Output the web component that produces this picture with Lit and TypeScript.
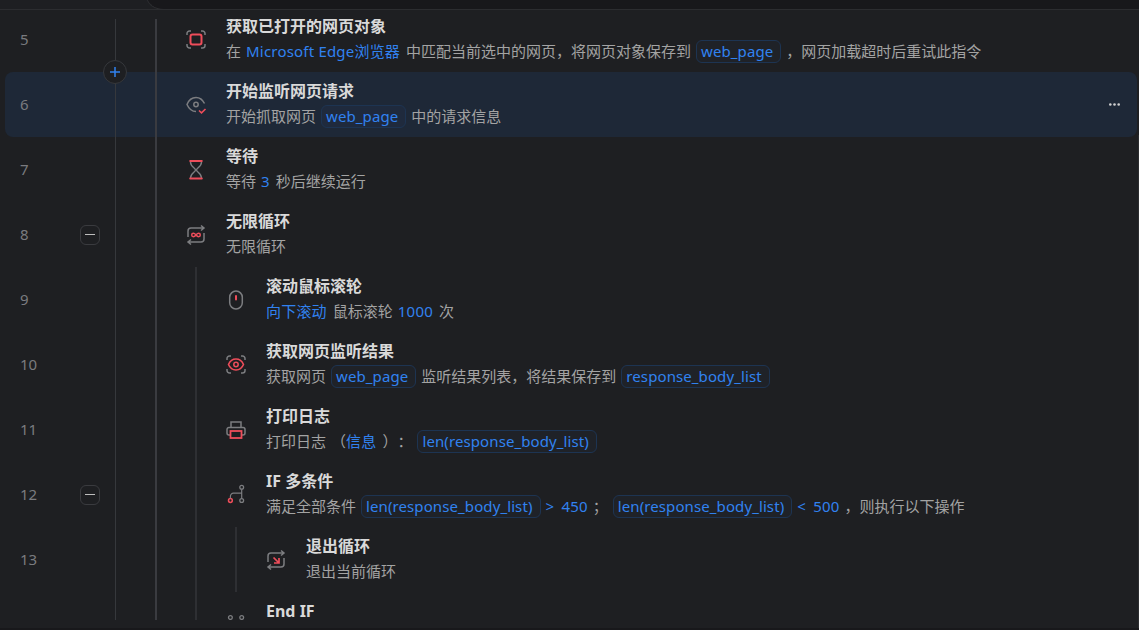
import { LitElement, html, css, svg, nothing } from "lit";
import { customElement } from "lit/decorators.js";

const G = "#7c7d80";
const R = "#ee4d5a";
const corners = svg`<path d="M1 5V3.500A2.500 2.500 0 0 1 3.500 1H5M15 1h1.500A2.500 2.500 0 0 1 19 3.500V5M19 14v1.500A2.500 2.500 0 0 1 16.500 18H15M5 18H3.500A2.500 2.500 0 0 1 1 15.500V14" fill="none" stroke="${G}" stroke-width="1.500"/>`;
const loop = svg`<path d="M2 12V6a3 3 0 0 1 3-3h13M15 .5l3 2.500-3 2.500M18 8v6a3 3 0 0 1-3 3H2M5 14.500L2 17l3 2.500" fill="none" stroke="${G}" stroke-width="1.500"/>`;
const ICONS: Record<string, unknown> = {
  page: svg`${corners}<rect x="4.500" y="4.500" width="11" height="10" rx="2" fill="none" stroke="${R}" stroke-width="2"/>`,
  watch: svg`<path d="M18.500 8.500C16.500 4.500 13.500 2.500 10 2.500S3 4.500 1 9.500c2 4.500 5 7 9 7" fill="none" stroke="${G}" stroke-width="1.500"/><circle cx="10" cy="9.500" r="2.200" fill="none" stroke="${G}" stroke-width="1.500"/><path d="M13 15.500l2.500 2.300L19.500 14" fill="none" stroke="${R}" stroke-width="1.600"/>`,
  wait: svg`<path d="M4.500 2C4.500 7 9.500 8 9.500 10S4.500 13 4.500 18M15.500 2C15.500 7 10.500 8 10.500 10S15.500 13 15.500 18" fill="none" stroke="${G}" stroke-width="1.400"/><path d="M4.200 1h11.600M4.200 18.500h11.600" stroke="${R}" stroke-width="2" stroke-linecap="round"/>`,
  loop: svg`${loop}<path d="M10 10c-1-1.200-1.700-1.700-2.600-1.700a1.700 1.700 0 0 0 0 3.400c.9 0 1.600-.5 2.600-1.700s1.700-1.700 2.600-1.700a1.700 1.700 0 0 1 0 3.400c-.9 0-1.600-.5-2.600-1.700z" fill="none" stroke="${R}" stroke-width="1.500"/>`,
  mouse: svg`<rect x="3.700" y="1" width="12.600" height="18" rx="6.300" fill="none" stroke="${G}" stroke-width="1.500"/><path d="M10 6v3.500" stroke="${R}" stroke-width="2" stroke-linecap="round"/>`,
  result: svg`${corners}<path d="M2.500 9.500C4 6 7 4 10 4s6 2 7.500 5.500C16 13 13 15 10 15S4 13 2.500 9.500z" fill="none" stroke="${R}" stroke-width="1.600"/><circle cx="10" cy="9.500" r="2.200" fill="none" stroke="${R}" stroke-width="1.500"/>`,
  print: svg`<path d="M5 7V2h10v5M5 15H3a2 2 0 0 1-2-2V9.500a2 2 0 0 1 2-2h14a2 2 0 0 1 2 2V13a2 2 0 0 1-2 2h-2" fill="none" stroke="${G}" stroke-width="1.500"/><rect x="4.500" y="11" width="11" height="7" fill="none" stroke="${R}" stroke-width="1.800"/>`,
  branch: svg`<circle cx="15.700" cy="2.300" r="1.900" fill="none" stroke="${G}" stroke-width="1.300"/><circle cx="15.700" cy="15.500" r="1.900" fill="none" stroke="${G}" stroke-width="1.300"/><circle cx="4.400" cy="15.500" r="1.900" fill="none" stroke="${R}" stroke-width="1.500"/><path d="M15.700 4.300v9.200M15.700 8.200H7.400a3 3 0 0 0-3 3v2.300" fill="none" stroke="${G}" stroke-width="1.200"/>`,
  exit: svg`${loop}<path d="M7.500 7.500l5 5M13 8v5H8" fill="none" stroke="${R}" stroke-width="1.700"/>`,
  end: svg`<circle cx="4.400" cy="2.500" r="1.900" fill="none" stroke="${G}" stroke-width="1.300"/><circle cx="15.700" cy="2.500" r="1.900" fill="none" stroke="${G}" stroke-width="1.300"/>`,
};

type Tok = string | { b: string } | { c: string } | { t: string } | { o: string };
interface Row {
  n: number; depth: number; icon: string; title: string; sub: Tok[];
  toggle?: boolean; active?: boolean;
}
const LEN = { c: "len(response_body_list)" };
const PAGE = { c: "web_page" };
const ROWS: Row[] = [
  { n: 5, depth: 0, icon: "page", title: "获取已打开的网页对象", sub: ["在", { b: "Microsoft Edge浏览器" }, "中匹配当前选中的网页，将网页对象保存到", PAGE, "，网页加载超时后重试此指令"] },
  { n: 6, depth: 0, icon: "watch", title: "开始监听网页请求", active: true, sub: ["开始抓取网页", PAGE, "中的请求信息"] },
  { n: 7, depth: 0, icon: "wait", title: "等待", sub: ["等待", { b: "3" }, "秒后继续运行"] },
  { n: 8, depth: 0, icon: "loop", title: "无限循环", toggle: true, sub: ["无限循环"] },
  { n: 9, depth: 1, icon: "mouse", title: "滚动鼠标滚轮", sub: [{ b: "向下滚动" }, "鼠标滚轮", { b: "1000" }, "次"] },
  { n: 10, depth: 1, icon: "result", title: "获取网页监听结果", sub: ["获取网页", PAGE, "监听结果列表，将结果保存到", { c: "response_body_list" }] },
  { n: 11, depth: 1, icon: "print", title: "打印日志", sub: ["打印日志", { t: "（" }, { b: "信息" }, "）：", LEN] },
  { n: 12, depth: 1, icon: "branch", title: "IF 多条件", toggle: true, sub: ["满足全部条件", LEN, { o: "> 450" }, "；", LEN, { o: "< 500" }, "，则执行以下操作"] },
  { n: 13, depth: 2, icon: "exit", title: "退出循环", sub: ["退出当前循环"] },
  { n: 14, depth: 1, icon: "end", title: "End IF", sub: [] },
];

@customElement("app-root")
export class AppRoot extends LitElement {
  static styles = css`
    :host {
      display: block; position: relative; width: 1139px; height: 630px; overflow: hidden; background: #1e1f22;
      font-family: "Noto Sans", "Noto Sans CJK SC", sans-serif; color: #a3a3a3;
    }
    .top { display: flex; height: 9px; border-bottom: 1px solid #2c2d30; overflow: hidden; }
    .top-left { flex: none; width: 146px; }
    .top-right {
      flex: 1; align-self: flex-start; height: 20px; margin-top: -11px; background: #18181b;
      border-left: 1px solid #2c2d30; border-bottom: 1px solid #2c2d30; border-bottom-left-radius: 18px 14px;
    }
    .list { height: 601px; margin-top: 9px; overflow: hidden; }
    .inner { margin-top: -12px; }
    .row {
      position: relative; display: flex; align-items: center; height: 65px; margin: 0 2px 0 5px;
      border-radius: 8px;
    }
    .row.active { background: #1e2837; }
    .gutter {
      flex: none; align-self: stretch; width: 95px; padding-left: 15px; margin-right: 39px;
      border-right: 1px solid #36383c; display: flex; align-items: center;
    }
    .num { width: 60px; margin-top: -2px; font-size: 15px; color: #7a7b7f; }
    .toggle {
      width: 20px; height: 20px; box-sizing: border-box; border: 1px solid #3a3b3f; border-radius: 6px;
      display: flex; align-items: center; justify-content: center;
    }
    .toggle i { display: block; width: 10px; height: 1.500px; background: #bdbdbd; }
    .guide { flex: none; align-self: stretch; width: 40px; box-sizing: border-box; border-left: 2px solid #2e2f33; }
    .guide.first { border-left-color: #3a3b40; }
    .cell { flex: none; align-self: stretch; display: flex; align-items: center; padding-left: 29px; border-left: 2px solid #2e2f33; }
    .cell.first { border-left-color: #3a3b40; }
    .icon { flex: none; width: 20px; height: 20px; margin-right: 20px; display: block; overflow: visible; }
    .text { display: flex; flex-direction: column; margin-top: -2px; }
    .title { font-size: 16px; line-height: 25px; font-weight: 700; color: #d9d9d9; height: 25px; }
    .sub {
      display: flex; align-items: center; gap: 5px; font-size: 15px; line-height: 25px; height: 25px;
      white-space: nowrap; text-spacing-trim: space-all;
    }
    .blue { color: #3182f0; letter-spacing: 0.2px; margin-right: 1px; }
    .op { color: #3182f0; letter-spacing: 0.2px; word-spacing: 3px; }
    .chip {
      color: #3182f0; border: 1px solid #1d3452; border-radius: 6px; padding: 0 7px 0 4px; height: 23px;
      box-sizing: border-box; line-height: 21px; letter-spacing: 0.1px; background: rgba(49, 130, 240, 0.03);
    }
    .tight { margin-right: -5px; }
    .more { margin-left: auto; margin-right: 17px; display: block; }
    .plus {
      position: absolute; left: 98px; top: -12px; width: 24px; height: 24px; box-sizing: border-box;
      border-radius: 50%; background: #1e1f22; border: 1px solid #36383c; display: flex; align-items: center; justify-content: center;
    }
    .edge { position: absolute; right: 0; top: 135px; height: 493px; width: 1px; background: #2c2d30; }
    .foot { height: 2px; margin-top: 8px; background: #18181b; }
  `;

  private tok(t: Tok) {
    if (typeof t === "string") return html`<span>${t}</span>`;
    if ("b" in t) return html`<span class="blue">${t.b}</span>`;
    if ("o" in t) return html`<span class="op">${t.o}</span>`;
    if ("c" in t) return html`<span class="chip">${t.c}</span>`;
    return html`<span class="tight">${t.t}</span>`;
  }

  private row(r: Row) {
    const guides = Array.from({ length: r.depth }, (_, i) => html`<div class="guide ${i === 0 ? "first" : ""}"></div>`);
    return html`<div class="row ${r.active ? "active" : ""}">
      <div class="gutter">
        <span class="num">${r.n}</span>
        ${r.toggle ? html`<span class="toggle"><i></i></span>` : nothing}
      </div>
      ${guides}
      <div class="cell ${r.depth === 0 ? "first" : ""}">
        <svg class="icon" viewBox="0 0 20 20">${ICONS[r.icon]}</svg>
        <div class="text">
          <div class="title">${r.title}</div>
          <div class="sub">${r.sub.map((t) => this.tok(t))}</div>
        </div>
      </div>
      ${r.active
        ? html`<svg class="more" width="11" height="3" viewBox="0 0 11 3"><circle cx="1.300" cy="1.500" r="1.300" fill="#d0d0d0"/><circle cx="5.500" cy="1.500" r="1.300" fill="#d0d0d0"/><circle cx="9.700" cy="1.500" r="1.300" fill="#d0d0d0"/></svg>
            <div class="plus"><svg width="12" height="12" viewBox="0 0 12 12"><path d="M6 1v10M1 6h10" stroke="#3182f0" stroke-width="1.500"/></svg></div>`
        : nothing}
    </div>`;
  }

  render() {
    return html`
      <div class="top"><div class="top-left"></div><div class="top-right"></div></div>
      <div class="list"><div class="inner">${ROWS.map((r) => this.row(r))}</div></div>
      <div class="foot"></div>
      <div class="edge"></div>
    `;
  }
}
